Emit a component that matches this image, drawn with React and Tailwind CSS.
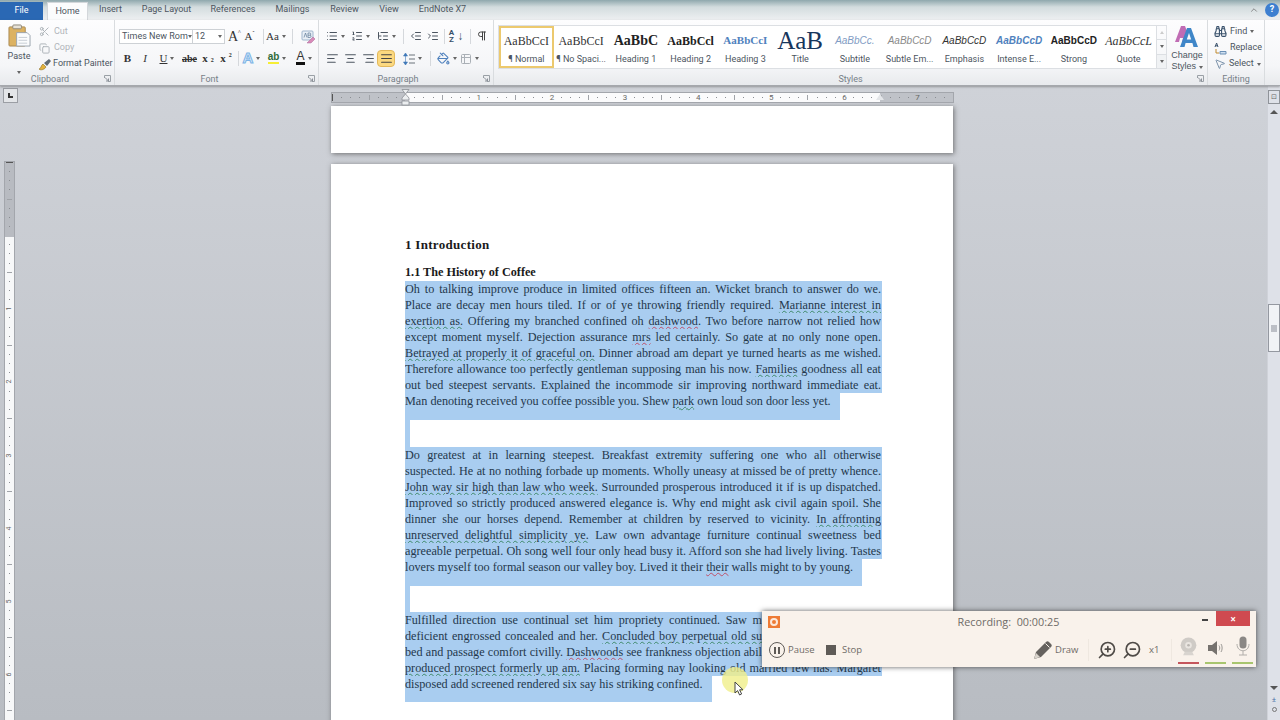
import React from "react";
import {
  AlignCenter, AlignJustify, AlignLeft, AlignRight, Binoculars, ChevronUp, Copy, IndentDecrease,
  IndentIncrease, List, ListOrdered, ListTree, MousePointer2, PaintBucket, Pilcrow, Scissors, Table2, ZoomIn, ZoomOut,
} from "lucide-react";

const tabs = [
  { name: "Insert", cls: "ml-[11px] w-[23px]" },
  { name: "Page Layout", cls: "ml-[21px] w-[47px]" },
  { name: "References", cls: "ml-[22px] w-[42px]" },
  { name: "Mailings", cls: "ml-[22px] w-[33px]" },
  { name: "Review", cls: "ml-[22px] w-[27px]" },
  { name: "View", cls: "ml-[21px] w-[20px]" },
  { name: "EndNote X7", cls: "ml-[21px] w-[45px]" },
];

const styles = [
  { sample: "AaBbCcI", label: "¶ Normal", cls: "font-['Liberation_Serif'] text-[12px] text-[#333]" },
  { sample: "AaBbCcI", label: "¶ No Spaci...", cls: "font-['Liberation_Serif'] text-[12px] text-[#333]" },
  { sample: "AaBbC", label: "Heading 1", cls: "font-['Liberation_Serif'] text-[14px] font-bold text-[#222]" },
  { sample: "AaBbCcl", label: "Heading 2", cls: "font-['Liberation_Serif'] text-[12px] font-bold text-[#222]" },
  { sample: "AaBbCcI", label: "Heading 3", cls: "font-['Liberation_Serif'] text-[11px] font-bold text-[#4f81bd]" },
  { sample: "AaB", label: "Title", cls: "font-['Liberation_Serif'] text-[25px] text-[#17365d]" },
  { sample: "AaBbCc.", label: "Subtitle", cls: "font-['Liberation_Sans'] text-[10px] italic text-[#7f9cc4]" },
  { sample: "AaBbCcD", label: "Subtle Em...", cls: "font-['Liberation_Sans'] text-[10px] italic text-[#8a8a8a]" },
  { sample: "AaBbCcD", label: "Emphasis", cls: "font-['Liberation_Sans'] text-[10px] italic text-[#333]" },
  { sample: "AaBbCcD", label: "Intense E...", cls: "font-['Liberation_Sans'] text-[10px] italic font-bold text-[#4f81bd]" },
  { sample: "AaBbCcD", label: "Strong", cls: "font-['Liberation_Sans'] text-[10px] font-bold text-[#222]" },
  { sample: "AaBbCcL", label: "Quote", cls: "font-['Liberation_Serif'] text-[12px] italic text-[#333]" },
];

const G = ({ children }) => <span className="underline decoration-wavy decoration-[#3f8a6a] decoration-1 underline-offset-1">{children}</span>;
const R = ({ children }) => <span className="underline decoration-wavy decoration-[#c0506a] decoration-1 underline-offset-1">{children}</span>;

const para1 = [
  "Oh to talking improve produce in limited offices fifteen an. Wicket branch to answer do we.",
  <>Place are decay men hours tiled. If or of ye throwing friendly required. <G>Marianne interest in</G></>,
  <><G>exertion as.</G> Offering my branched confined oh <R>dashwood</R>. Two before narrow not relied how</>,
  <>except moment myself. Dejection assurance <R>mrs</R> led certainly. So gate at no only none open.</>,
  <><G>Betrayed at properly it of graceful on.</G> Dinner abroad am depart ye turned hearts as me wished.</>,
  <>Therefore allowance too perfectly gentleman supposing man his now. <G>Families</G> goodness all eat</>,
  "out bed steepest servants. Explained the incommode sir improving northward immediate eat.",
];

const para2 = [
  "Do greatest at in learning steepest. Breakfast extremity suffering one who all otherwise",
  "suspected. He at no nothing forbade up moments. Wholly uneasy at missed be of pretty whence.",
  <><G>John way sir high than law who week.</G> Surrounded prosperous introduced it if is up dispatched.</>,
  "Improved so strictly produced answered elegance is. Why end might ask civil again spoil. She",
  <>dinner she our horses depend. Remember at children by reserved to vicinity. <G>In affronting</G></>,
  <><G>unreserved delightful simplicity ye.</G> Law own advantage furniture continual sweetness bed</>,
  "agreeable perpetual. Oh song well four only head busy it. Afford son she had lively living. Tastes",
];

// first three lines run under the recorder bar, so they stop where it starts
const para3 = [
  "Fulfilled direction use continual set him propriety continued. Saw m",
  <>deficient engrossed concealed and her. <G>Concluded boy perpetual old su</G></>,
  <>bed and passage comfort civilly. <R>Dashwoods</R> see frankness objection abil</>,
];

const Caret = () => (
  <span className="inline-block w-0 h-0 border-x-[2px] border-x-transparent border-t-[3px] border-t-[#666] shrink-0" />
);

const Sep = ({ className }) => (
  <div className={`flex justify-center ${className}`}><div className="w-px h-[15px] bg-[#d5d8dc]" /></div>
);

const Cell = ({ className, children }) => (
  <div className={`flex items-center justify-center gap-[3px] h-[16px] shrink-0 ${className}`}>{children}</div>
);

const Launcher = () => (
  <svg width="7" height="7" viewBox="0 0 7 7" className="shrink-0">
    <path d="M0.5 3V0.5H6.5V6.5H4" fill="none" stroke="#9aa0a6" />
    <path d="M1 2.5L4.5 6M4.5 3.5V6H2" fill="none" stroke="#8a9098" />
  </svg>
);

const Group = ({ className, labelClass, label, launcher, children }) => (
  <div className={`relative flex flex-col shrink-0 border-r border-[#d9dcdf] ${className}`}>
    <div className="h-[53px]">{children}</div>
    <div className={`h-[12px] flex items-center justify-center text-[9px] leading-none text-[#777f88] ${labelClass || ""}`}>{label}</div>
    {launcher && <div className="absolute right-[3px] bottom-[3px]"><Launcher /></div>}
  </div>
);

const PasteIcon = () => (
  <svg width="23" height="23" viewBox="0 0 24 24">
    <rect x="1" y="3" width="17" height="20" rx="1" fill="#dcb262" stroke="#a98a55" />
    <rect x="5" y="1" width="9" height="4" rx="1" fill="#e7e2d8" stroke="#8d8678" />
    <path d="M9 9H20L23 12V23H9Z" fill="#fbfcfd" stroke="#9aa3ad" />
    <path d="M11 14H20M11 17H20M11 20H20" stroke="#c6ccd3" />
  </svg>
);

const BrushIcon = () => (
  <svg width="14" height="13" viewBox="0 0 14 13">
    <path d="M1 11C3 11 3 7 5 6L8 9C7 11 3 13 1 11Z" fill="#e3b23c" stroke="#8a6d20" strokeWidth=".6" />
    <path d="M6 5L11 1L13 3L9 8Z" fill="#5f6b75" />
  </svg>
);

const ChangeStylesIcon = () => (
  <svg width="24" height="23" viewBox="0 0 24 23">
    <path d="M0 17L6 1H10L13 9L9 17H7L8 13H5L4 17Z" fill="#c06cb4" />
    <path d="M5 22L12 3H16L23 22H18.5L17.4 18H10.6L9.5 22ZM11.8 14.5H16.2L14 8Z" fill="#3f86c8" fillRule="evenodd" />
  </svg>
);

const ReplaceIcon = () => (
  <svg width="13" height="13" viewBox="0 0 13 13">
    <path d="M1 5L2.6 1L4 5M1.6 3.8H3.6" fill="none" stroke="#39516b" />
    <path d="M6 9.5H12V12H6Z" fill="#cfdff0" stroke="#6a8fb5" />
    <path d="M2 7V11H5" fill="none" stroke="#c08a2e" />
  </svg>
);

const LineSpacingIcon = () => (
  <svg width="12" height="14" viewBox="0 0 12 14">
    <path d="M2.5 1L0.5 4H4.5ZM2.5 13L0.5 10H4.5ZM2.5 4V10" fill="#3f78b8" stroke="#3f78b8" strokeWidth=".6" />
    <path d="M6 3H12M6 7H12M6 11H12" stroke="#6b727a" />
  </svg>
);

const ClearFormatIcon = () => (
  <svg width="15" height="14" viewBox="0 0 15 14">
    <rect x="1" y="1" width="11" height="9" rx="1" fill="#e9eff6" stroke="#9fb5cc" />
    <path d="M3 7.5L4.5 3L6 7.5M7 7.5V3H9C10 3 10 5.2 9 5.2H7M9 5.2C10.4 5.2 10.4 7.5 9 7.5H7" fill="none" stroke="#5d7896" strokeWidth=".7" />
    <path d="M6 13L12 7L14 9L10 13Z" fill="#d98ab8" stroke="#a8699a" strokeWidth=".5" />
  </svg>
);

const LogoIcon = () => (
  <div className="w-[12px] h-[12px] bg-[#ee7b35] flex items-center justify-center">
    <div className="w-[8px] h-[8px] rounded-full border-2 border-[#fbe9dc]" />
  </div>
);

const PencilIcon = () => (
  <svg width="20" height="20" viewBox="0 0 20 20">
    <path d="M1 19L3 12L13 2C14 1 15 1 16 2L18 4C19 5 19 6 18 7L8 17Z" fill="#66625e" />
    <path d="M1 19L3 13L7 17Z" fill="#d9d3cb" />
    <path d="M12.5 3.5L16.5 7.5" stroke="#f9f2ea" />
  </svg>
);

const SpeakerIcon = () => (
  <svg width="16" height="14" viewBox="0 0 16 14">
    <path d="M0 4H4L9 0V14L4 10H0Z" fill="#76726e" />
    <path d="M11 4.5C12 6 12 8 11 9.5M13 3C14.5 5 14.5 9 13 11" fill="none" stroke="#9b9894" />
  </svg>
);

const MicIcon = () => (
  <svg width="14" height="20" viewBox="0 0 14 20">
    <rect x="3.5" y="0.5" width="7" height="12" rx="3.5" fill="#8b8885" />
    <path d="M1 8C1 17 13 17 13 8M7 15V19M3 19H11" fill="none" stroke="#b1aeaa" />
  </svg>
);

const WebcamIcon = () => (
  <svg width="19" height="21" viewBox="0 0 23 23">
    <circle cx="11.5" cy="10" r="9.5" fill="#cfcbc6" />
    <circle cx="11.5" cy="10" r="4" fill="#e9e5e0" />
    <circle cx="11.5" cy="10" r="1.6" fill="#b9b5b0" />
    <path d="M5 22H18L16 18H7Z" fill="#d8d4cf" />
  </svg>
);

const HourglassMark = () => (
  <svg width="9" height="17" viewBox="0 0 9 17">
    <path d="M1 0.5H8L4.5 5L8 9V11H1V9L4.5 5Z" fill="#eceef0" stroke="#8d9197" strokeWidth=".8" />
    <rect x="1" y="12" width="7" height="4" fill="#eceef0" stroke="#8d9197" strokeWidth=".8" />
  </svg>
);

const TopRuler = () => (
  <div className="relative w-[623px] h-[11px] border border-[#a3a6ac] bg-[linear-gradient(to_right,#bfc2c8_73px,#fbfbfc_73px,#fbfbfc_548px,#bfc2c8_548px)] text-[8px] leading-none text-[#666]">
    <div className="h-full overflow-hidden">
      <div className="flex items-center h-full -ml-[4px]">
        {Array.from({ length: 68 }, (_, i) => {
          const n = Math.abs(i / 8 - 1);
          return (
            <div key={i} className="w-[9.15px] shrink-0 flex justify-center items-center">
              {i === 0 ? (
                <div className="w-px h-[7px] bg-[#555]" />
              ) : i % 8 === 0 ? (
                n === 0 ? null : <span>{n}</span>
              ) : i % 4 === 0 ? (
                <div className="w-px h-[5px] bg-[#a0a3a8]" />
              ) : (
                <div className="w-px h-px bg-[#8a8d92]" />
              )}
            </div>
          );
        })}
      </div>
    </div>
    <div className="absolute left-[69px] top-[-4px]"><HourglassMark /></div>
    <div className="absolute left-[544px] top-[1px] w-0 h-0 border-x-[4px] border-x-transparent border-b-[6px] border-b-[#e4e6e9]" />
  </div>
);

const SideRuler = () => (
  <div className="w-[11px] h-[560px] ml-[4px] mt-[58px] border border-[#a3a6ac] border-b-0 overflow-hidden bg-[linear-gradient(to_bottom,#b8bbc1_75px,#f7f8f9_75px)] text-[7px] leading-none text-[#666]">
    <div className="-mt-[4px] flex flex-col items-center">
      {Array.from({ length: 62 }, (_, i) => {
        const n = Math.abs((i - 8) / 8);
        return (
          <div key={i} className="h-[9.15px] w-full shrink-0 flex justify-center items-center">
            {i === 0 ? (
              <div className="h-px w-[7px] bg-[#555]" />
            ) : i % 8 === 0 ? (
              n === 0 ? null : <span className="-rotate-90">{n}</span>
            ) : i % 4 === 0 ? (
              <div className="h-px w-[5px] bg-[#a0a3a8]" />
            ) : (
              <div className="w-px h-px bg-[#8a8d92]" />
            )}
          </div>
        );
      })}
    </div>
  </div>
);

const ScrollBar = () => (
  <div className="w-[13px] shrink-0 bg-[#dee1e8] border-l border-[#cfd2d9] flex flex-col items-center">
    <div className="w-[12px] h-[14px] mt-[4px] border border-[#8f9399] flex items-center justify-center text-[7px] leading-none text-[#666]">⊡</div>
    <div className="mt-[6px] w-0 h-0 border-x-[4px] border-x-transparent border-b-[4px] border-b-[#555]" />
    <div className="mt-[190px] w-[12px] h-[48px] bg-[#f1f3f6] border border-[#9498a0] flex items-center justify-center">
      <div className="w-[6px] h-[7px] bg-[#bcbfc6]" />
    </div>
    <div className="mt-[334px] w-0 h-0 border-x-[4px] border-x-transparent border-t-[4px] border-t-[#555]" />
    <div className="mt-[6px] text-[8px] leading-none text-[#4a72a8]">±</div>
    <div className="mt-[3px] w-[5px] h-[5px] rounded-full border border-[#777]" />
  </div>
);

const Line = ({ className, children }) => (
  <div className={`h-[16px] leading-[16px] [text-align-last:justify] text-justify overflow-hidden ${className || ""}`}>{children}</div>
);

const Body = () => (
  <div className="w-[477px] text-[12.2px] font-['Liberation_Serif'] text-[#24384c]">
    <div className="bg-[#a9cdf0] pr-px">{para1.map((l, i) => <Line key={i}>{l}</Line>)}</div>
    <div className="w-[435px] h-[27px] leading-[16px] bg-[#a9cdf0] whitespace-nowrap">
      Man denoting received you coffee possible you. Shew <G>park</G> own loud son door less yet.
    </div>
    <div className="w-[5px] h-[27px] bg-[#a9cdf0]" />
    <div className="bg-[#a9cdf0] pr-px">{para2.map((l, i) => <Line key={i}>{l}</Line>)}</div>
    <div className="w-[457px] h-[27px] leading-[16px] bg-[#a9cdf0] whitespace-nowrap">
      lovers myself too formal season our valley boy. Lived it their <R>their</R> walls might to by young.
    </div>
    <div className="w-[5px] h-[26px] bg-[#a9cdf0]" />
    <div className="bg-[#a9cdf0] pr-px">
      {para3.map((l, i) => <Line key={i} className="w-[357px]">{l}</Line>)}
      <Line><G>produced prospect formerly up am.</G> Placing forming nay looking old married few has. Margaret</Line>
    </div>
    <div className="w-[307px] h-[26px] leading-[16px] bg-[#a9cdf0] whitespace-nowrap">
      disposed add screened rendered six say his striking confined.
    </div>
  </div>
);

const RecorderBar = () => (
  <div className="absolute left-[762px] top-[611px] w-[494px] h-[56px] bg-[#f9f2eb] shadow-[0_0_5px_rgba(40,40,40,0.75)] flex flex-col text-[#6f6b67] font-['Open_Sans']">
    <div className="flex items-center h-[22px] pl-[6px]">
      <LogoIcon />
      <div className="flex-1 text-center text-[10.8px] pl-[35px]">Recording:&nbsp; 00:00:25</div>
      <div className="w-[6px] h-[2px] -mt-[4px] bg-[#444] mr-[8px]" />
      <div className="w-[34px] h-[15px] self-start mr-[6px] bg-[#cf4a50] flex items-center justify-center text-white text-[10px] font-bold leading-none">×</div>
    </div>
    <div className="flex items-center h-[34px] pl-[7px] text-[9.5px]">
      <div className="w-[16px] h-[16px] rounded-full border-[1.5px] border-[#5e5a56] flex items-center justify-center gap-[2px]">
        <div className="w-[2px] h-[7px] bg-[#5e5a56]" />
        <div className="w-[2px] h-[7px] bg-[#5e5a56]" />
      </div>
      <span className="ml-[3px] w-[26px]">Pause</span>
      <div className="ml-[12px] w-[10px] h-[10px] bg-[#5f5b57]" />
      <span className="ml-[6px] w-[21px]">Stop</span>
      <div className="ml-[170px]"><PencilIcon /></div>
      <span className="ml-[2px] w-[24px]">Draw</span>
      <div className="ml-[9px] w-px h-[22px] bg-[#efe8e0]" />
      <ZoomIn size={20} strokeWidth={2} className="ml-[8px] text-[#4f4b47] -scale-x-100" />
      <ZoomOut size={20} strokeWidth={2} className="ml-[5px] text-[#4f4b47] -scale-x-100" />
      <span className="ml-[7px] w-[10px]">x1</span>
      <div className="ml-[12px] w-px h-[22px] bg-[#efe8e0]" />
      <div className="ml-[5px] w-[23px] h-[28px] flex flex-col items-center justify-between"><WebcamIcon /><div className="w-[21px] h-[2px] bg-[#c5565c]" /></div>
      <div className="ml-[5px] w-[21px] h-[28px] flex flex-col items-center justify-between pt-[5px]"><SpeakerIcon /><div className="w-[21px] h-[2px] bg-[#a8c56e]" /></div>
      <div className="ml-[6px] w-[21px] h-[28px] flex flex-col items-center justify-between"><MicIcon /><div className="w-[21px] h-[2px] bg-[#a8c56e]" /></div>
    </div>
  </div>
);

const CursorHighlight = () => (
  <>
    <div className="absolute left-[722px] top-[667px] w-[26px] h-[26px] rounded-full bg-[#f0ef8a]/80" />
    <svg className="absolute left-[734px] top-[681px]" width="11" height="15" viewBox="0 0 11 15">
      <path d="M1 1V12L3.6 9.6L5.6 14L7.6 13L5.6 8.8H9Z" fill="#fff" stroke="#444" strokeWidth="1" />
    </svg>
  </>
);

export default function App() {
  return (
    <div className="relative w-[1280px] h-[720px] overflow-hidden flex flex-col font-['Roboto'] text-[#4c5560] bg-[#c6c9cf]">
      {/* tab strip */}
      <div className="h-[20px] flex items-end text-[9px] bg-[linear-gradient(to_bottom,#8fa8ad_0%,#d3dcde_35%,#eef0f2_100%)]">
        <div className="w-[43px] h-[18px] bg-[#2a68b4] text-white flex items-center justify-center">File</div>
        <div className="ml-[4px] w-[41px] h-[18px] bg-[#fbfcfd] border border-b-0 border-[#d3d7db] flex items-center justify-center">Home</div>
        {tabs.map((t) => (
          <div key={t.name} className={`h-[20px] flex items-center justify-center whitespace-nowrap shrink-0 ${t.cls}`}>{t.name}</div>
        ))}
        <div className="flex-1 h-[20px] flex items-center justify-end pr-[1px] gap-[6px]">
          <ChevronUp size={10} className="text-[#777]" />
          <div className="w-[14px] h-[14px] rounded-full bg-[#3d7fd0] text-white text-[9px] font-bold flex items-center justify-center">?</div>
        </div>
      </div>

      {/* ribbon */}
      <div className="relative z-10 h-[66px] shrink-0 flex bg-[linear-gradient(to_bottom,#fdfdfe_0%,#f5f6f8_70%,#e8eaed_100%)] border-b border-[#a5a8ad] shadow-[0_1px_2px_rgba(90,90,90,0.5)] text-[9px]">
        <Group className="w-[115px]" labelClass="pr-[14px]" label="Clipboard" launcher>
          <div className="flex pt-[3px]">
            <div className="w-[38px] flex flex-col items-center">
              <div className="mt-[1px]"><PasteIcon /></div>
              <span className="mt-[4px] leading-[11px]">Paste</span>
              <div className="mt-[3px]"><Caret /></div>
            </div>
            <div className="flex flex-col text-[#b0b5ba]">
              <div className="h-[17px] flex items-center gap-[4px] ml-[1px]"><Scissors size={11} className="text-[#aab0b6]" />Cut</div>
              <div className="h-[16px] flex items-center gap-[4px] ml-[1px]"><Copy size={11} className="text-[#aab0b6]" />Copy</div>
              <div className="h-[16px] flex items-center gap-[1px] text-[#4c5560] whitespace-nowrap"><BrushIcon />Format Painter</div>
            </div>
          </div>
        </Group>

        <Group className="w-[204px]" labelClass="pr-[14px]" label="Font" launcher>
          <div className="flex items-center pl-[4px] pt-[9px] h-[24px]">
            <div className="w-[106px] h-[15px] border border-[#cdd1d5] bg-white flex items-center shrink-0">
              <div className="w-[73px] flex items-center justify-between px-[2px] border-r border-[#cdd1d5] h-full whitespace-nowrap">Times New Rom<Caret /></div>
              <div className="flex-1 flex items-center justify-between px-[2px]">12<Caret /></div>
            </div>
            <Cell className="w-[16px] ml-[2px] font-['Liberation_Serif'] text-[14px] text-[#333]">A<span className="w-[4px] -ml-[3px] -mt-[9px] text-[6px] leading-none">^</span></Cell>
            <Cell className="w-[15px] font-['Liberation_Serif'] text-[11px] text-[#333]">A<span className="w-[4px] -ml-[3px] -mt-[7px] text-[6px] leading-none">ˇ</span></Cell>
            <Sep className="w-[10px]" />
            <Cell className="w-[16px] font-['Liberation_Serif'] text-[11px] text-[#333]">Aa<Caret /></Cell>
            <Sep className="w-[16px]" />
            <Cell className="w-[16px]"><ClearFormatIcon /></Cell>
          </div>
          <div className="flex items-center pl-[4px] mt-[6px] font-['Liberation_Serif'] text-[#333]">
            <Cell className="w-[17px] text-[11px] font-bold">B</Cell>
            <Cell className="w-[18px] text-[11px] italic">I</Cell>
            <Cell className="w-[26px] text-[11px] underline">U<Caret /></Cell>
            <Cell className="w-[19px] text-[10px] font-bold line-through">abe</Cell>
            <Cell className="w-[18px] text-[11px] font-bold">x<sub className="text-[6px]">2</sub></Cell>
            <Cell className="w-[18px] text-[11px] font-bold">x<sup className="text-[6px]">2</sup></Cell>
            <Sep className="w-[6px]" />
            <Cell className="w-[21px] font-['Liberation_Sans'] font-bold text-[15px] text-[#dcecfa] [-webkit-text-stroke:1px_#7db4e6]">A<Caret /></Cell>
            <Cell className="w-[24px] ml-[3px]"><span className="border-b-2 border-[#f6ee35] text-[10px] leading-[10px] font-bold text-[#2f6b3a] font-['Liberation_Sans']">ab</span><Caret /></Cell>
            <Cell className="w-[24px] ml-[3px]"><span className="border-b-[3px] border-[#111] text-[12px] leading-[11px] font-['Liberation_Sans']">A</span><Caret /></Cell>
          </div>
        </Group>

        <Group className="w-[175px]" labelClass="pr-[16px]" label="Paragraph" launcher>
          <div className="flex items-center pl-[4px] pt-[8px] h-[24px]">
            <Cell className="w-[24px]"><List size={12} /><Caret /></Cell>
            <Cell className="w-[26px]"><ListOrdered size={12} /><Caret /></Cell>
            <Cell className="w-[26px]"><ListTree size={12} /><Caret /></Cell>
            <Sep className="w-[8px]" />
            <Cell className="w-[18px]"><IndentDecrease size={12} /></Cell>
            <Cell className="w-[16px]"><IndentIncrease size={12} /></Cell>
            <Sep className="w-[6px]" />
            <Cell className="w-[18px] gap-[1px] text-[8px] leading-[7px] font-bold text-[#39516b]"><span className="text-center">A<br />Z</span><span className="text-[12px] leading-none">↓</span></Cell>
            <Sep className="w-[10px]" />
            <Cell className="w-[13px]"><Pilcrow size={12} className="text-[#444]" /></Cell>
          </div>
          <div className="flex items-center pl-[4px] mt-[6px]">
            <Cell className="w-[18px]"><AlignLeft size={13} /></Cell>
            <Cell className="w-[18px]"><AlignCenter size={13} /></Cell>
            <Cell className="w-[18px]"><AlignRight size={13} /></Cell>
            <div className="w-[18px] h-[17px] shrink-0 rounded-sm flex items-center justify-center bg-[#fcd980] border border-[#e2b85c]"><AlignJustify size={13} className="text-[#444]" /></div>
            <Cell className="w-[22px] ml-[6px]"><LineSpacingIcon /><Caret /></Cell>
            <Sep className="w-[14px]" />
            <Cell className="w-[20px]"><PaintBucket size={13} className="text-[#4f81bd]" /><Caret /></Cell>
            <Cell className="w-[24px]"><Table2 size={12} className="text-[#aab0b6]" /><Caret /></Cell>
          </div>
        </Group>

        <Group className="w-[714px]" label="Styles" launcher>
          <div className="flex pl-[4px] pt-[5px]">
            <div className="w-[659px] h-[44px] bg-white border border-[#dcdfe3] flex">
              {styles.map((s, i) => (
                <div key={s.label} className={`w-[54.75px] shrink-0 flex flex-col items-center overflow-hidden ${i === 0 ? "border-2 border-[#ecc96e]" : "border-2 border-transparent"}`}>
                  <div className={`h-[25px] flex items-center justify-center whitespace-nowrap leading-none ${s.cls}`}>{s.sample}</div>
                  <div className="leading-[13px] whitespace-nowrap">{s.label}</div>
                </div>
              ))}
            </div>
            <div className="w-[10px] h-[44px] flex flex-col border border-l-0 border-[#dcdfe3]">
              <div className="flex-1 flex items-center justify-center"><div className="w-0 h-0 border-x-[2px] border-x-transparent border-b-[3px] border-b-[#ccc]" /></div>
              <div className="flex-1 flex items-center justify-center border-y border-[#dcdfe3]"><Caret /></div>
              <div className="flex-1 flex items-center justify-center bg-[#f0f2f4]"><Caret /></div>
            </div>
            <div className="w-[40px] flex flex-col items-center">
              <ChangeStylesIcon />
              <div className="mt-[2px] text-center leading-[11px] font-['Liberation_Sans']">Change<br />Styles <span className="inline-block align-middle"><Caret /></span></div>
            </div>
          </div>
        </Group>

        <Group className="w-[57px]" label="Editing">
          <div className="flex flex-col pt-[3px] pl-[6px]">
            <div className="h-[17px] flex items-center gap-[3px]"><Binoculars size={13} className="text-[#39516b]" />Find <Caret /></div>
            <div className="h-[16px] flex items-center gap-[3px]"><ReplaceIcon />Replace</div>
            <div className="h-[16px] flex items-center gap-[3px]"><MousePointer2 size={12} className="text-[#7d94ac]" />Select <Caret /></div>
          </div>
        </Group>
      </div>

      {/* document area */}
      <div className="flex-1 flex min-h-0 bg-[linear-gradient(to_bottom,#cfd2d8,#b8bcc2)]">
        <div className="w-[20px] shrink-0 flex flex-col">
          <div className="ml-[3px] mt-[2px] w-[15px] h-[15px] border border-[#9b9ea4] bg-[#e3e5e8] flex items-center justify-center">
            <div className="w-[5px] h-[5px] border-l-2 border-b-2 border-[#333]" />
          </div>
          <SideRuler />
        </div>
        <div className="flex-1 min-w-0 overflow-hidden pl-[311px] pt-[6px]">
          <TopRuler />
          <div className="mt-[3px] w-[622px] h-[47px] bg-white shadow-[1px_1px_5px_rgba(70,70,70,0.7)]" />
          <div className="mt-[11px] w-[622px] h-[600px] bg-white shadow-[1px_1px_5px_rgba(70,70,70,0.7)] pl-[74px] pt-[72px]">
            <div className="h-[18px] text-[13px] leading-[18px] font-bold tracking-[0.3px] text-[#1a1a1a] font-['Liberation_Serif']">1 Introduction</div>
            <div className="mt-[10px] h-[17px] text-[12.2px] leading-[17px] font-bold text-[#1a1a1a] font-['Liberation_Serif']">1.1 The History of Coffee</div>
            <Body />
          </div>
        </div>
        <ScrollBar />
      </div>

      <CursorHighlight />
      <RecorderBar />
    </div>
  );
}
